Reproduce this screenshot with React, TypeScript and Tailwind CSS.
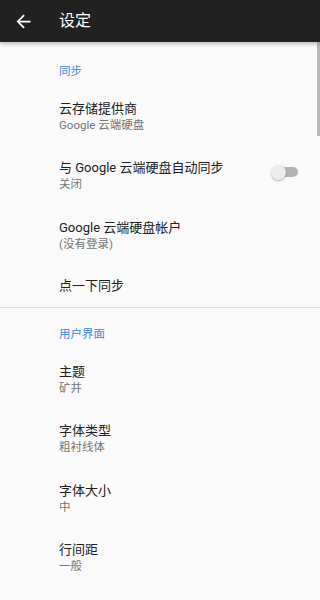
import React from "react";

const font = { fontFamily: 'Roboto, "Noto Sans CJK SC", sans-serif' };

function Section({ label, className }: { label: string; className: string }) {
  return (
    <div className={`pl-[59px] ${className}`}>
      <div className="text-[11.5px] leading-[16px] text-[#3f88ee]">{label}</div>
    </div>
  );
}

function Item({ title, sub, toggle }: { title: string; sub?: string; toggle?: boolean }) {
  return (
    <div className="flex h-[59.5px] items-center pl-[59px]">
      <div className="flex flex-1 flex-col">
        <div className="text-[13px] leading-[18px] text-[#212121]">{title}</div>
        {sub && <div className="text-[11.5px] leading-[15px] text-[#757575]">{sub}</div>}
      </div>
      {toggle && (
        <div className="relative mr-[22px] mb-[7px] h-[15px] w-[27px]">
          <div className="absolute left-[3px] top-[2.5px] h-[10px] w-[24px] rounded-full bg-[#b3b3b3]" />
          <div className="absolute left-0 top-0 h-[15px] w-[15px] rounded-full bg-[#ececec] shadow-[0_1px_2px_rgba(0,0,0,0.3)]" />
        </div>
      )}
    </div>
  );
}

export default function App() {
  return (
    <div className="relative h-[600px] w-[320px] overflow-hidden bg-[#fafafa]" style={font}>
      <div className="relative z-10 flex h-[42px] items-center bg-[#212121] shadow-[0_2px_4px_rgba(0,0,0,0.25)]">
        <svg className="ml-[12.5px]" width="21" height="21" viewBox="0 0 24 24" fill="#ffffff">
          <path d="M20 11H7.83l5.59-5.59L12 4l-8 8 8 8 1.41-1.41L7.83 13H20v-2z" />
        </svg>
        <div className="ml-[25.5px] text-[16px] leading-[20px] text-white">设定</div>
      </div>

      <Section label="同步" className="pt-[21px] pb-[7.25px]" />
      <Item title="云存储提供商" sub="Google 云端硬盘" />
      <Item title="与 Google 云端硬盘自动同步" sub="关闭" toggle />
      <Item title="Google 云端硬盘帐户" sub="(没有登录)" />
      <div className="flex h-[42.5px] items-center pl-[59px]">
        <div className="text-[13px] leading-[18px] text-[#212121]">点一下同步</div>
      </div>
      <div className="h-px bg-[#e0e0e0]" />

      <Section label="用户界面" className="pt-[18px] pb-[7.25px]" />
      <Item title="主题" sub="矿井" />
      <Item title="字体类型" sub="粗衬线体" />
      <Item title="字体大小" sub="中" />
      <Item title="行间距" sub="一般" />

      <div className="absolute right-0 top-[42px] h-[94px] w-[3px] bg-[#b8b8b8]" />
    </div>
  );
}
